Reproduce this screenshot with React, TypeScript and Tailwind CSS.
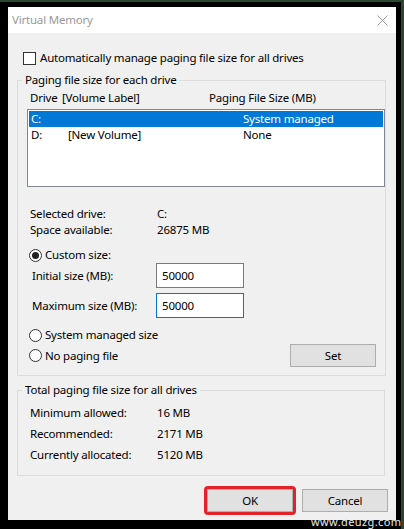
import React from 'react'

const Checkbox = ({ label }: { label: string }) => (
  <div className="flex h-[16px] items-center gap-[4px] pl-[6px]">
    <span className="h-[13px] w-[13px] border border-[#333] bg-white" />
    <span>{label}</span>
  </div>
)

const Radio = ({ checked, label }: { checked?: boolean; label: string }) => (
  <div className="flex items-center gap-[3px]">
    <span className="flex h-[13px] w-[13px] items-center justify-center rounded-full border border-[#333] bg-white">
      {checked && <span className="h-[7px] w-[7px] rounded-full bg-[#222]" />}
    </span>
    <span>{label}</span>
  </div>
)

const Button = ({ label, highlight }: { label: string; highlight?: boolean }) => (
  <button
    className={
      highlight
        ? 'h-[23px] w-[86px] rounded-[1px] border border-[#adadad] bg-[#e1e1e1] outline-[3px] outline-solid outline-[#e3232a]'
        : 'h-[23px] w-[86px] border border-[#adadad] bg-[#e1e1e1]'
    }
  >
    {label}
  </button>
)

const drives = [
  { letter: 'C:', label: '', size: 'System managed', selected: true },
  { letter: 'D:', label: '[New Volume]', size: 'None', selected: false },
]

const totals = [
  ['Minimum allowed:', '16 MB'],
  ['Recommended:', '2171 MB'],
  ['Currently allocated:', '5120 MB'],
]

export default function App() {
  return (
    <div className="relative h-[529px] w-[404px] overflow-hidden border-t-2 border-r-[3px] border-[#2c472e] bg-black pt-[5px] pl-[8px] font-['Noto_Sans',sans-serif] text-[11.5px] leading-[16px] tracking-[-0.2px] text-black">
      <div className="flex h-[513px] w-[388px] flex-col bg-[#f0f0f0]">
        {/* title bar */}
        <div className="flex h-[26px] items-center justify-between bg-white pl-[4px] pr-[8px]">
          <span className="text-[#9a9a9a]">Virtual Memory</span>
          <svg width="11" height="11" viewBox="0 0 11 11" className="text-[#9a9a9a]">
            <path d="M0.5 0.5 L10.5 10.5 M10.5 0.5 L0.5 10.5" stroke="currentColor" strokeWidth="1" />
          </svg>
        </div>

        <div className="flex flex-col px-[9px]">
          <div className="mt-[17px]">
            <Checkbox label="Automatically manage paging file size for all drives" />
          </div>

          <fieldset className="mt-[6px] h-[304px] w-[368px] border border-[#dcdcdc]">
            <legend className="ml-[4px] px-[3px] leading-[16px]">Paging file size for each drive</legend>
            <div className="mt-[2px] flex h-[16px] items-center pl-[12px]">
              <span className="w-[32px]">Drive</span>
              <span className="w-[147px]">[Volume Label]</span>
              <span>Paging File Size (MB)</span>
            </div>
            <div className="mt-[3px] ml-[9px] h-[78px] w-[358px] border border-[#828790] bg-white p-[1px]">
              {drives.map(d => (
                <div
                  key={d.letter}
                  className={
                    d.selected
                      ? 'flex h-[16px] items-center bg-[#0078d7] pl-[2px] text-white'
                      : 'flex h-[16px] items-center pl-[2px]'
                  }
                >
                  <span className="w-[37px]">{d.letter}</span>
                  <span className="w-[175px]">{d.label}</span>
                  <span>{d.size}</span>
                </div>
              ))}
            </div>

            <div className="mt-[19px] flex flex-col pl-[12px]">
              <div className="flex h-[16px] items-center">
                <span className="w-[127px]">Selected drive:</span>
                <span>C:</span>
              </div>
              <div className="flex h-[16px] items-center">
                <span className="w-[127px]">Space available:</span>
                <span>26875 MB</span>
              </div>
            </div>

            <div className="mt-[9px] flex h-[16px] items-center pl-[11px]">
              <Radio checked label="Custom size:" />
            </div>
            <div className="flex h-[25px] items-center pl-[14px]">
              <span className="w-[124px]">Initial size (MB):</span>
              <div className="flex h-[25px] w-[88px] items-center border border-[#7a7a7a] bg-white pl-[5px]">50000</div>
            </div>
            <div className="mt-[5px] flex h-[25px] items-center pl-[14px]">
              <span className="w-[124px]">Maximum size (MB):</span>
              <div className="flex h-[25px] w-[88px] items-center border border-[#0078d7] bg-white pl-[5px]">50000</div>
            </div>
            <div className="mt-[9px] flex h-[16px] items-center pl-[11px]">
              <Radio label="System managed size" />
            </div>
            <div className="mt-[1px] flex h-[23px] items-center justify-between pl-[11px] pr-[9px]">
              <Radio label="No paging file" />
              <button className="h-[23px] w-[86px] border border-[#adadad] bg-[#e1e1e1]">Set</button>
            </div>
          </fieldset>

          <fieldset className="mt-[6px] h-[94px] w-[368px] border border-[#dcdcdc]">
            <legend className="ml-[4px] px-[3px] leading-[16px]">Total paging file size for all drives</legend>
            <div className="mt-[4px] flex flex-col pl-[12px]">
              {totals.map(([k, v]) => (
                <div key={k} className="flex h-[21px] items-center">
                  <span className="w-[127px]">{k}</span>
                  <span>{v}</span>
                </div>
              ))}
            </div>
          </fieldset>

          <div className="mt-[13px] -mr-[1px] flex justify-end gap-[9px]">
            <Button label="OK" highlight />
            <Button label="Cancel" />
          </div>
        </div>
      </div>

      <span className="absolute top-[513px] left-[311px] text-[11px] leading-[14px] tracking-[0.4px] text-[#e8e8e8]">www.deuzg.com</span>
    </div>
  )
}
